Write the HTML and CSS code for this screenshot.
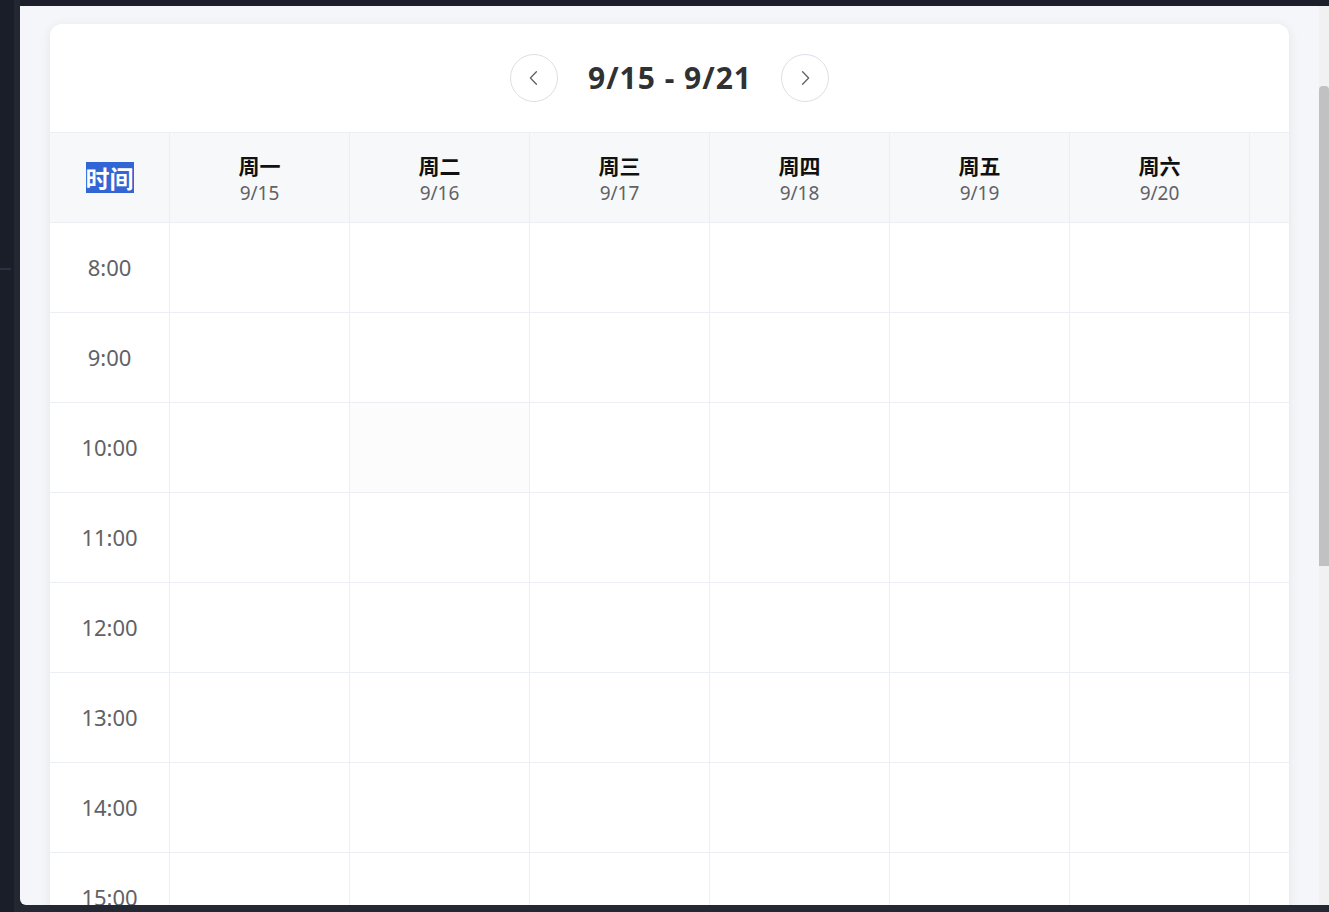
FILE: index.html
```html
<!DOCTYPE html>
<html lang="zh-CN">
<head>
<meta charset="utf-8">
<title>周视图</title>
<link rel="stylesheet" href="styles.css">
</head>
<body>
<div class="app">
  <aside class="sidebar">
    <div class="sidebar-inner"><div class="sidebar-mark"></div></div>
    <div class="sidebar-edge"></div>
  </aside>
  <main class="main">
    <div class="panel">
      <div class="panel-content">
        <section class="card">
          <div class="week-nav">
            <button class="nav-btn" aria-label="上一周">
              <svg width="14" height="14" viewBox="0 0 14 14"><path d="M9.4 0.8 L3.4 7 L9.4 13.2" fill="none" stroke="#606266" stroke-width="1.3" stroke-linecap="round" stroke-linejoin="round"/></svg>
            </button>
            <div class="week-title">9/15 - 9/21</div>
            <button class="nav-btn" aria-label="下一周">
              <svg width="14" height="14" viewBox="0 0 14 14"><path d="M4.6 0.8 L10.6 7 L4.6 13.2" fill="none" stroke="#606266" stroke-width="1.3" stroke-linecap="round" stroke-linejoin="round"/></svg>
            </button>
          </div>
          <div class="grid-wrap">
            <div class="grid">
              <div class="cell head time-head"><span class="selected">时间</span></div>
              <div class="cell head day"><div class="day-name">周一</div><div class="day-date">9/15</div></div>
              <div class="cell head day"><div class="day-name">周二</div><div class="day-date">9/16</div></div>
              <div class="cell head day"><div class="day-name">周三</div><div class="day-date">9/17</div></div>
              <div class="cell head day"><div class="day-name">周四</div><div class="day-date">9/18</div></div>
              <div class="cell head day"><div class="day-name">周五</div><div class="day-date">9/19</div></div>
              <div class="cell head day"><div class="day-name">周六</div><div class="day-date">9/20</div></div>
              <div class="cell head day"><div class="day-name">周日</div><div class="day-date">9/21</div></div>

              <div class="cell time">8:00</div><div class="cell slot"></div><div class="cell slot"></div><div class="cell slot"></div><div class="cell slot"></div><div class="cell slot"></div><div class="cell slot"></div><div class="cell slot"></div>
              <div class="cell time">9:00</div><div class="cell slot"></div><div class="cell slot"></div><div class="cell slot"></div><div class="cell slot"></div><div class="cell slot"></div><div class="cell slot"></div><div class="cell slot"></div>
              <div class="cell time">10:00</div><div class="cell slot"></div><div class="cell slot hover"></div><div class="cell slot"></div><div class="cell slot"></div><div class="cell slot"></div><div class="cell slot"></div><div class="cell slot"></div>
              <div class="cell time">11:00</div><div class="cell slot"></div><div class="cell slot"></div><div class="cell slot"></div><div class="cell slot"></div><div class="cell slot"></div><div class="cell slot"></div><div class="cell slot"></div>
              <div class="cell time">12:00</div><div class="cell slot"></div><div class="cell slot"></div><div class="cell slot"></div><div class="cell slot"></div><div class="cell slot"></div><div class="cell slot"></div><div class="cell slot"></div>
              <div class="cell time">13:00</div><div class="cell slot"></div><div class="cell slot"></div><div class="cell slot"></div><div class="cell slot"></div><div class="cell slot"></div><div class="cell slot"></div><div class="cell slot"></div>
              <div class="cell time">14:00</div><div class="cell slot"></div><div class="cell slot"></div><div class="cell slot"></div><div class="cell slot"></div><div class="cell slot"></div><div class="cell slot"></div><div class="cell slot"></div>
              <div class="cell time">15:00</div><div class="cell slot"></div><div class="cell slot"></div><div class="cell slot"></div><div class="cell slot"></div><div class="cell slot"></div><div class="cell slot"></div><div class="cell slot"></div>
              <div class="cell time">16:00</div><div class="cell slot"></div><div class="cell slot"></div><div class="cell slot"></div><div class="cell slot"></div><div class="cell slot"></div><div class="cell slot"></div><div class="cell slot"></div>
            </div>
          </div>
        </section>
      </div>
      <div class="scrollbar"><div class="thumb"></div></div>
    </div>
    <div class="bottom-bar"></div>
  </main>
</div>
</body>
</html>
```

FILE: styles.css
```css
* { box-sizing: border-box; }

html, body {
  margin: 0;
  padding: 0;
  height: 912px;
  overflow: hidden;
  background: #1b1f2a;
  font-family: "Noto Sans", "Noto Sans CJK SC", sans-serif;
}

.app {
  display: flex;
  height: 912px;
}

.sidebar {
  width: 20px;
  display: flex;
  flex-shrink: 0;
}

.sidebar-inner {
  width: 14px;
  background: #1a1e29;
  padding-top: 268px;
}

.sidebar-mark {
  width: 11px;
  height: 2px;
  background: #2c3040;
}

.sidebar-edge {
  width: 6px;
  background: #222731;
}

.main {
  flex: 1;
  min-width: 0;
  display: flex;
  flex-direction: column;
  padding-top: 6px;
  background: #1b1f2a;
}

.panel {
  height: 899px;
  flex-shrink: 0;
  display: flex;
  background: #f5f6fa;
  border-bottom-left-radius: 6px;
  overflow: hidden;
}

.bottom-bar {
  flex: 1;
  background: #232833;
}

.panel-content {
  flex: 1;
  min-width: 0;
  padding: 18px 30px 0 30px;
  overflow: hidden;
}

.scrollbar {
  width: 10px;
  flex-shrink: 0;
  background: #f1f1f1;
  padding-top: 80px;
}

.thumb {
  height: 480px;
  background: #c1c1c1;
  border-radius: 4px 4px 0 0;
}

.card {
  background: #ffffff;
  border-radius: 12px;
  box-shadow: 0 2px 12px rgba(0, 0, 0, 0.07);
  overflow: hidden;
  min-height: 1000px;
}

.week-nav {
  height: 108px;
  display: flex;
  align-items: center;
  justify-content: center;
  gap: 30px;
}

.nav-btn {
  width: 48px;
  height: 48px;
  border: 1px solid #dcdfe6;
  border-radius: 50%;
  background: #ffffff;
  display: flex;
  align-items: center;
  justify-content: center;
  padding: 0;
}

.week-title {
  font-size: 30px;
  font-weight: 700;
  color: #303133;
  line-height: 40px;
  letter-spacing: 1px;
  margin-right: -1px;
}

.grid-wrap {
  overflow: hidden;
  border-top: 1px solid #ebeef3;
}

.grid {
  display: grid;
  grid-template-columns: 120px repeat(7, 180px);
  grid-auto-rows: 90px;
  width: 1380px;
}

.cell {
  border-right: 1px solid #ebeef3;
  border-bottom: 1px solid #ebeef3;
}

.head {
  background: #f7f8fa;
}

.time-head {
  display: flex;
  align-items: center;
  justify-content: center;
}

.selected {
  background: #3166d4;
  color: #ffffff;
  font-size: 24px;
  font-weight: 700;
  line-height: 31px;
  height: 31px;
  font-family: "Noto Sans CJK SC", sans-serif;
}

.day {
  display: flex;
  flex-direction: column;
  align-items: center;
  padding-top: 19px;
}

.day-name {
  font-family: "Noto Sans CJK SC", sans-serif;
  font-size: 21px;
  font-weight: 700;
  color: #111111;
  line-height: 26px;
}

.day-date {
  font-size: 19px;
  color: #606266;
  line-height: 30px;
}

.time {
  display: flex;
  align-items: center;
  justify-content: center;
  font-size: 22px;
  color: #606266;
  padding-bottom: 2px;
}

.slot.hover {
  background: #fcfcfc;
}
```
